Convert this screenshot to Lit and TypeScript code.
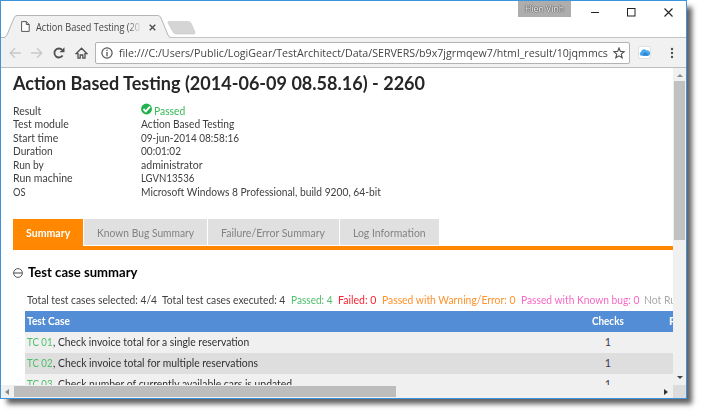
import { LitElement, html, css } from "lit";
import { customElement, property } from "lit/decorators.js";

/** A single line of text, condensed or widened to fill a given width. */
@customElement("fit-text")
class FitText extends LitElement {
  @property({ type: Number }) w = 0;
  @property() text = "";

  static styles = css`
    :host { display: inline-block; white-space: pre; vertical-align: top; }
    span { display: inline-block; transform-origin: 0 50%; }
  `;

  async updated() {
    await document.fonts.ready;
    const el = this.renderRoot.querySelector("span")!;
    const natural = el.offsetWidth;
    el.style.transform = `scaleX(${this.w / natural})`;
    el.style.marginRight = `${this.w - natural}px`;
  }

  render() {
    return html`<span>${this.text}</span>`;
  }
}

const fit = (text: string, w: number, cls = "") =>
  html`<fit-text class=${cls} .text=${text} .w=${w}></fit-text>`;

type Label = [string, number];

const info: [Label, Label][] = [
  [["Result", 28], ["Passed", 31.5]],
  [["Test module", 55.5], ["Action Based Testing", 93.5]],
  [["Start time", 45.5], ["09-jun-2014 08:58:16", 98]],
  [["Duration", 39.5], ["00:01:02", 40]],
  [["Run by", 31], ["administrator", 61.5]],
  [["Run machine", 59.5], ["LGVN13536", 53.5]],
  [["OS", 13], ["Microsoft Windows 8 Professional, build 9200, 64-bit", 240]],
];

const tabs: [string, number, string][] = [
  ["Summary", 44, "t1 on"],
  ["Known Bug Summary", 97, "t2"],
  ["Failure/Error Summary", 104, "t3"],
  ["Log Information", 72.5, "t4"],
];

const totals: [string, number, string][] = [
  ["Total test cases selected: 4/4", 130, "dark"],
  ["Total test cases executed: 4", 123.5, "dark"],
  ["Passed: 4", 42, "green"],
  ["Failed: 0", 38, "red"],
  ["Passed with Warning/Error: 0", 133, "orange"],
  ["Passed with Known bug: 0", 118.5, "pink"],
  ["Not Run: 0", 49, "gray"],
];

const cases: [string, string, number][] = [
  ["TC 01", ", Check invoice total for a single reservation", 196.5],
  ["TC 02", ", Check invoice total for multiple reservations", 204.5],
  ["TC 03", ", Check number of currently available cars is updated", 239.5],
];

@customElement("app-root")
class AppRoot extends LitElement {
  static styles = css`
    :host { display: block; width: 702px; height: 414px; overflow: hidden; background: #fff; font-family: Lato, "Open Sans", sans-serif; }
    * { box-sizing: border-box; }
    svg { display: block; flex: none; }
    .window { width: 687px; height: 399px; border: 1px solid #3c94dc; background: #fff; display: flex; flex-direction: column; box-shadow: 6px 6px 5px -1px rgba(0,0,0,.62); }
    .strip { height: 37px; flex: none; position: relative; display: flex; border-bottom: 1px solid #c4c4c4; }
    .shape { position: absolute; left: 0; top: 13px; }
    .tabin { position: relative; display: flex; align-items: flex-start; width: 172px; padding: 18px 0 0 20px; }
    .tabtitle { margin: 0 0 0 6px; width: 104px; font: 10.8px/15px "Open Sans", sans-serif; color: #444; overflow: hidden; -webkit-mask-image: linear-gradient(90deg, #000 88%, transparent 102%); mask-image: linear-gradient(90deg, #000 88%, transparent 102%); }
    .tabx { margin: 5px 0 0 9px; }
    .user { margin-left: 345px; width: 53px; height: 16px; background: #adadad; font: 9.8px/16px "Open Sans", sans-serif; color: #fff; text-shadow: 0 0 1px #333, 0 0 1px #333, 0 0 1px #444; text-align: center; }
    .controls { display: flex; margin: 7px 0 0 20px; gap: 28px; }
    .toolbar { height: 30px; flex: none; display: flex; align-items: center; background: #f1f1f1; border-bottom: 1px solid #bdbdbd; padding-left: 8px; }
    .nav { display: flex; gap: 10px; }
    .url { margin-left: 7px; width: 535px; height: 22px; border: 1px solid #b3b3b3; border-radius: 2px; background: #fff; display: flex; align-items: center; padding-left: 5px; font: 11.5px/18px "Open Sans", sans-serif; color: #444; }
    .urltext { width: 490px; margin-left: 6px; overflow: hidden; display: block; }
    .star { margin-left: 4px; }
    .cloud { margin-left: 8px; width: 13px; height: 13px; border: 1px solid #e0e0e0; border-radius: 2px; background: #fff; }
    .dots { margin-left: 19px; }
    .view { flex: 1; min-height: 0; display: grid; grid-template-columns: 672px 13px; grid-template-rows: 317px 13px; }
    .page { overflow: hidden; padding-left: 12px; font-size: 10.8px; color: #404040; }
    h1 { margin: 3px 0 0; height: 24px; font-size: 18.8px; line-height: 24px; font-weight: 700; color: #262626; }
    .info { margin-top: 8px; padding-top: .5px; }
    .row { display: grid; grid-template-columns: 128px 1fr; height: 13.6px; line-height: 13.6px; }
    .val { display: flex; }
    .val svg { margin: -.5px 2.5px 0 -.5px; }
    .ok { color: #37b956; }
    .tabs { margin-top: 20.300px; display: flex; gap: 1px; height: 31px; border-bottom: 4px solid #ff8600; }
    .tab { height: 26px; background: #e0e0e0; color: #828282; line-height: 28px; padding-left: 13px; }
    .t1 { width: 70px; } .t2 { width: 123px; } .t3 { width: 131px; } .t4 { width: 99px; }
    .on { background: #ff8800; color: #fff; height: 27px; font-weight: 700; padding-left: 13px; }
    .section { margin-top: 14px; display: flex; align-items: center; gap: 5px; height: 18px; color: #000; font-size: 12.8px; font-weight: 700; }
    .section fit-text { margin-top: -1px; }
    .totals { margin: 10px 0 0 14px; height: 19px; line-height: 17px; display: flex; gap: 5.4px; }
    .totals fit-text { flex: none; }
    .totals { padding-top: 0; margin-top: 9px; margin-bottom: 1px; }
    .dark { color: #404040; } .green { color: #4fbf6b; } .red { color: #f82430; } .orange { color: #ff922b; } .pink { color: #f767c4; } .gray { color: #a9a9a9; }
    .table { margin-left: 12px; width: 760px; }
    .tr { display: grid; grid-template-columns: 541px 80px 1fr; height: 21px; line-height: 20px; padding-left: 2px; background: #f0f0f0; color: #303030; }
    .tr:nth-child(3) { background: #dedede; }
    .th { background: #538dd5; color: #fff; font-weight: 700; }
    .c { text-align: center; color: #3c3c50; }
    .th .c { color: #fff; }
    .p { padding-left: 21px; }
    .vbar { background: #f0f0f0; display: flex; flex-direction: column; align-items: center; padding-top: 6px; }
    .vthumb { margin-top: 4px; width: 11px; height: 159px; background: #c1c1c1; }
    .down { margin-top: auto; margin-bottom: 6px; }
    .hbar { background: #f0f0f0; display: flex; align-items: center; padding-left: 4px; }
    .hthumb { margin-left: 5px; width: 382px; height: 11px; background: #bdbdbd; }
    .right { margin-left: auto; margin-right: 5px; }
    .corner { background: #dcdcdc; }
  `;

  render() {
    return html`
      <div class="window">
        <div class="strip">
          <svg class="shape" width="200" height="24" viewBox="0 1 200 24">
            <path d="M0 25H3Q5 25 6 22L13 5Q14 2.500 16 2.500H157Q159 2.500 160 5L167 22Q168 25 170 25Z" fill="#f1f1f1" />
            <path d="M0 24.500H3Q5 24 6 22L13 5Q14 2.500 16 2.500H157Q159 2.500 160 5L167 22Q168 24.500 170 24.500" fill="none" stroke="#b5b5b5" />
            <path d="M168 8.500H187Q189 8.500 190 10L194 19Q194.500 21 192 21H175Q173 21 172 19L167 10Q166.500 8.500 168 8.500Z" fill="#d5d5d5" stroke="#c6c6c6" stroke-width=".6" />
          </svg>
          <div class="tabin">
            <svg width="9" height="13" viewBox="0 0 9 13"><path d="M.6 2.600H5.300L8.200 5.500V12.400H.6ZM5.300 2.600V5.500H8.200" fill="#fff" stroke="#555" /></svg>
            <div class="tabtitle">${fit("Action Based Testing (2014-06", 128)}</div>
            <svg class="tabx" width="7" height="7" viewBox="0 0 7 7"><path d="M.7.7L6.300 6.300M6.300.7L.7 6.300" stroke="#4a4a4a" stroke-width="1.300" /></svg>
          </div>
          <div class="user">${fit("Hien Vinh", 39)}</div>
          <div class="controls">
            <svg width="8" height="9"><path d="M0 4.500H8" stroke="#222" /></svg>
            <svg width="9" height="9"><rect x=".5" y=".5" width="7.500" height="7.500" fill="none" stroke="#222" /></svg>
            <svg width="9" height="9"><path d="M.5.5L8.500 8.500M8.500.5L.5 8.500" stroke="#222" stroke-width="1.100" /></svg>
          </div>
        </div>

        <div class="toolbar">
          <div class="nav">
            <svg width="12" height="12" viewBox="0 0 12 12"><path d="M12 6H1.500M6 1.200L1.200 6L6 10.800" fill="none" stroke="#c9c9c9" stroke-width="1.400" /></svg>
            <svg width="12" height="12" viewBox="0 0 12 12"><path d="M0 6H10.500M6 1.200L10.800 6L6 10.800" fill="none" stroke="#c9c9c9" stroke-width="1.400" /></svg>
            <svg width="12" height="12" viewBox="0 0 12 12"><path d="M9.600 8.600A4.500 4.500 0 1 1 9.200 2.900" fill="none" stroke="#505050" stroke-width="1.800" /><path d="M11.500.3V5.300H6.500Z" fill="#505050" /></svg>
            <svg width="13" height="12" viewBox="0 0 13 12"><path d="M1 6.700L6.500 1.200L12 6.700H10V11.200H7.800V8H5.200V11.200H3V6.700Z" fill="none" stroke="#505050" stroke-width="1.300" /></svg>
          </div>
          <div class="url">
            <svg width="12" height="12" viewBox="0 0 12 12"><circle cx="6" cy="6" r="5.100" fill="none" stroke="#555" stroke-width="1.200" /><path d="M6 5V9.200M6 2.800V4.100" stroke="#555" stroke-width="1.300" /></svg>
            <div class="urltext">${fit("file:///C:/Users/Public/LogiGear/TestArchitect/Data/SERVERS/b9x7jgrmqew7/html_result/10jqmmcs", 489)}</div>
            <svg class="star" width="12" height="12" viewBox="0 0 12 12"><path d="M6 1L7.400 4.400L11.200 4.700L8.300 7.100L9.200 10.800L6 8.800L2.800 10.800L3.700 7.100L.8 4.700L4.600 4.400Z" fill="none" stroke="#505050" stroke-width="1.100" /></svg>
          </div>
          <svg class="cloud" viewBox="0 0 11 11"><path d="M2.300 8.800A2 2 0 0 1 2 5A3 3 0 0 1 7.300 3.500A2.800 2.800 0 0 1 9.300 8.800Z" fill="#48a7ec" /><path d="M4 8.800A2.400 2.400 0 0 1 8.500 7A1.500 1.500 0 0 1 9.300 8.800Z" fill="#2f86d5" /></svg>
          <svg class="dots" width="4" height="12" viewBox="0 0 4 12"><circle cx="2" cy="2" r="1.200" fill="#505050" /><circle cx="2" cy="6" r="1.200" fill="#505050" /><circle cx="2" cy="10" r="1.200" fill="#505050" /></svg>
        </div>

        <div class="view">
          <div class="page">
            <h1>${fit("Action Based Testing (2014-06-09 08.58.16) - 2260", 412)}</h1>
            <div class="info">
              ${info.map(([k, v], i) => html`
                <div class="row">
                  <div>${fit(k[0], k[1])}</div>
                  <div class="val ${i === 0 ? "ok" : ""}">
                    ${i === 0 ? html`<svg width="11" height="12" viewBox="0 0 10 11"><circle cx="5" cy="5.500" r="5" fill="#22b14c" /><path d="M2.200 5.500L4.300 7.600L8.200 3.300" fill="none" stroke="#fff" stroke-width="1.700" /></svg>` : ""}
                    ${fit(v[0], v[1])}
                  </div>
                </div>`)}
            </div>
            <div class="tabs">${tabs.map(([t, w, c]) => html`<div class="tab ${c}">${fit(t, w)}</div>`)}</div>
            <div class="section">
              <svg width="10" height="10" viewBox="0 0 10 10"><circle cx="5" cy="5" r="4.400" fill="none" stroke="#444" stroke-width=".9" /><path d="M1 5H9" stroke="#444" /></svg>
              ${fit("Test case summary", 109.5)}
            </div>
            <div class="totals">${totals.map(([t, w, c]) => fit(t, w, c))}</div>
            <div class="table">
              <div class="tr th"><div>${fit("Test Case", 42.5)}</div><div class="c">${fit("Checks", 32)}</div><div class="p">Passed</div></div>
              ${cases.map(([id, t, w]) => html`
                <div class="tr"><div>${fit(id, 26, "green")}${fit(t, w)}</div><div class="c">1</div><div class="p"></div></div>`)}
            </div>
          </div>
          <div class="vbar">
            <svg width="6" height="3"><path d="M0 3L3 0L6 3Z" fill="#8a8a8a" /></svg>
            <div class="vthumb"></div>
            <svg class="down" width="6" height="3"><path d="M0 0L3 3L6 0Z" fill="#444" /></svg>
          </div>
          <div class="hbar">
            <svg width="4" height="6"><path d="M4 0L0 3L4 6Z" fill="#8a8a8a" /></svg>
            <div class="hthumb"></div>
            <svg class="right" width="4" height="6"><path d="M0 0L4 3L0 6Z" fill="#333" /></svg>
          </div>
          <div class="corner"></div>
        </div>
      </div>`;
  }
}
